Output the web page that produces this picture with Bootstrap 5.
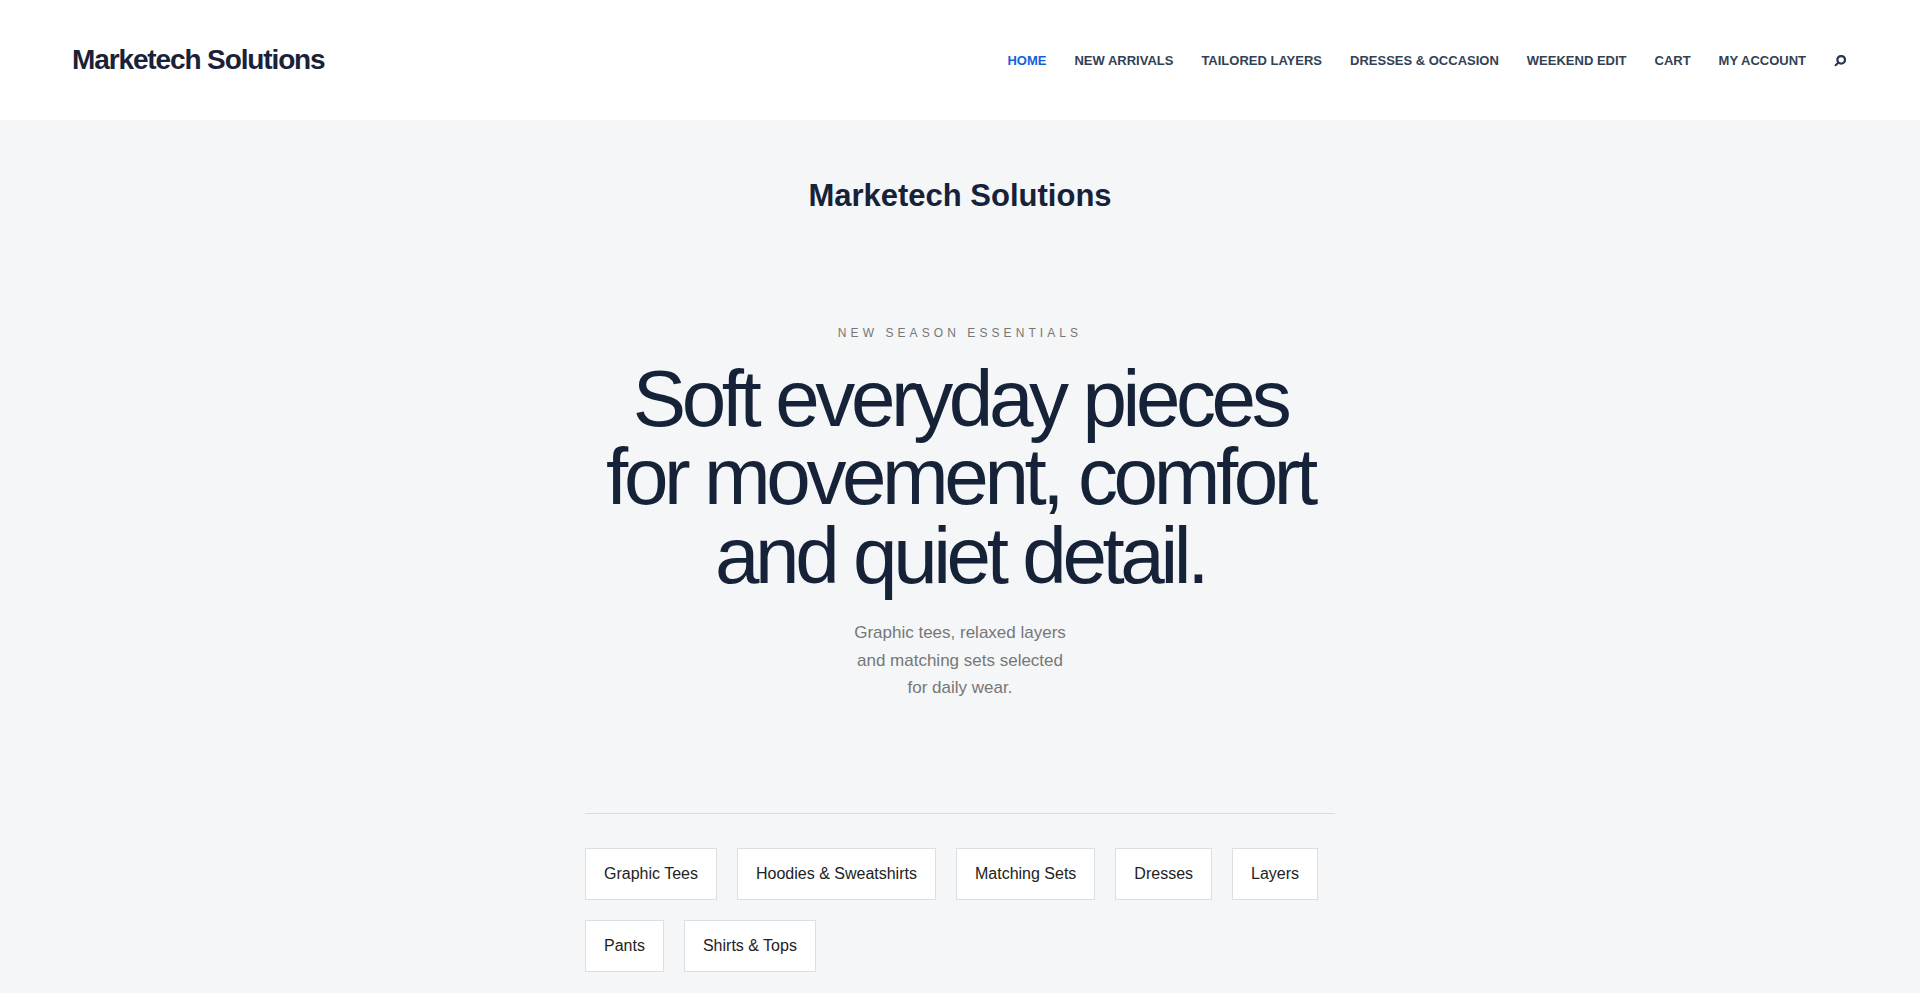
<!DOCTYPE html>
<html lang="en">
<head>
<meta charset="utf-8">
<meta name="viewport" content="width=device-width, initial-scale=1">
<title>Marketech Solutions</title>
<link rel="stylesheet" href="https://cdn.jsdelivr.net/npm/bootstrap@5.3.0/dist/css/bootstrap.min.css">
<style>
  body { background: #f4f6f8; color: #162238; font-family: "Liberation Sans", Arial, sans-serif; }
  .site-header { min-height: 120px; padding: 0 72px; }
  .site-header .navbar-brand { font-size: 28px; letter-spacing: -.04em; color: #1a2238; }
  .main-menu { gap: 8px 28px; }
  .site-header .main-menu .nav-link { padding: 2px 0 0; font-size: 13px; line-height: 20px; font-weight: 700; text-transform: uppercase; color: #334155; }
  .site-header .main-menu .nav-link.active { color: #1660d8; }
  .search-toggle { line-height: 0; padding: 0 2px 0 0; color: #2b3650; }
  .page-column { max-width: 750px; }
  .site-title { font-size: 31px; line-height: 40px; padding-top: 56px; }
  .hero { padding: 107px 0 111px; }
  .eyebrow { font-size: 12px; line-height: 20px; letter-spacing: .34em; color: #777; margin-bottom: 17px; }
  .hero-title { font-size: 80px; line-height: .98; letter-spacing: -.055em; font-weight: 400; margin-bottom: 24px; }
  .hero-text { font-size: 17px; line-height: 1.62; color: #777; max-width: 220px; }
  .category-list { border-top: 1px solid #d9dcdf; padding: 34px 0; gap: 20px; }
  .category-link { background: #fff; border: 1px solid #dcdfe1; padding: 12px 18px; line-height: 26px; color: #222; }
  @media (max-width: 767px) {
    .site-header { padding: 24px; }
    .hero-title { font-size: 48px; }
  }
</style>
</head>
<body>
<header class="site-header navbar navbar-expand bg-white d-flex justify-content-between align-items-center">
  <a class="navbar-brand fw-bold m-0 p-0" href="#">Marketech Solutions</a>
  <nav aria-label="Main">
    <ul class="main-menu navbar-nav flex-wrap align-items-center">
      <li class="nav-item"><a class="nav-link active" aria-current="page" href="#">Home</a></li>
      <li class="nav-item"><a class="nav-link" href="#">New Arrivals</a></li>
      <li class="nav-item"><a class="nav-link" href="#">Tailored Layers</a></li>
      <li class="nav-item"><a class="nav-link" href="#">Dresses &amp; Occasion</a></li>
      <li class="nav-item"><a class="nav-link" href="#">Weekend Edit</a></li>
      <li class="nav-item"><a class="nav-link" href="#">Cart</a></li>
      <li class="nav-item"><a class="nav-link" href="#">My Account</a></li>
      <li class="nav-item">
        <button class="search-toggle btn border-0" type="button" aria-label="Search">
          <svg width="12" height="12" viewBox="0 0 12 12" fill="none" stroke="currentColor" aria-hidden="true">
            <circle cx="7.2" cy="4.8" r="3.8" stroke-width="2.3"/>
            <path d="M4.2 7.8 1.6 10.2" stroke-width="2.1" stroke-linecap="round"/>
          </svg>
        </button>
      </li>
    </ul>
  </nav>
</header>
<main class="page-column container-fluid p-0">
  <h2 class="site-title fw-bold text-center m-0">Marketech Solutions</h2>
  <section class="hero text-center">
    <p class="eyebrow text-uppercase">New Season Essentials</p>
    <h1 class="hero-title">Soft everyday pieces for movement, comfort and quiet detail.</h1>
    <p class="hero-text mx-auto mb-0">Graphic tees, relaxed layers and matching sets selected for daily wear.</p>
  </section>
  <nav class="category-list d-flex flex-wrap" aria-label="Categories">
    <a class="category-link text-decoration-none" href="#">Graphic Tees</a>
    <a class="category-link text-decoration-none" href="#">Hoodies &amp; Sweatshirts</a>
    <a class="category-link text-decoration-none" href="#">Matching Sets</a>
    <a class="category-link text-decoration-none" href="#">Dresses</a>
    <a class="category-link text-decoration-none" href="#">Layers</a>
    <a class="category-link text-decoration-none" href="#">Pants</a>
    <a class="category-link text-decoration-none" href="#">Shirts &amp; Tops</a>
  </nav>
</main>
<script src="https://cdn.jsdelivr.net/npm/bootstrap@5.3.0/dist/js/bootstrap.bundle.min.js"></script>
</body>
</html>
